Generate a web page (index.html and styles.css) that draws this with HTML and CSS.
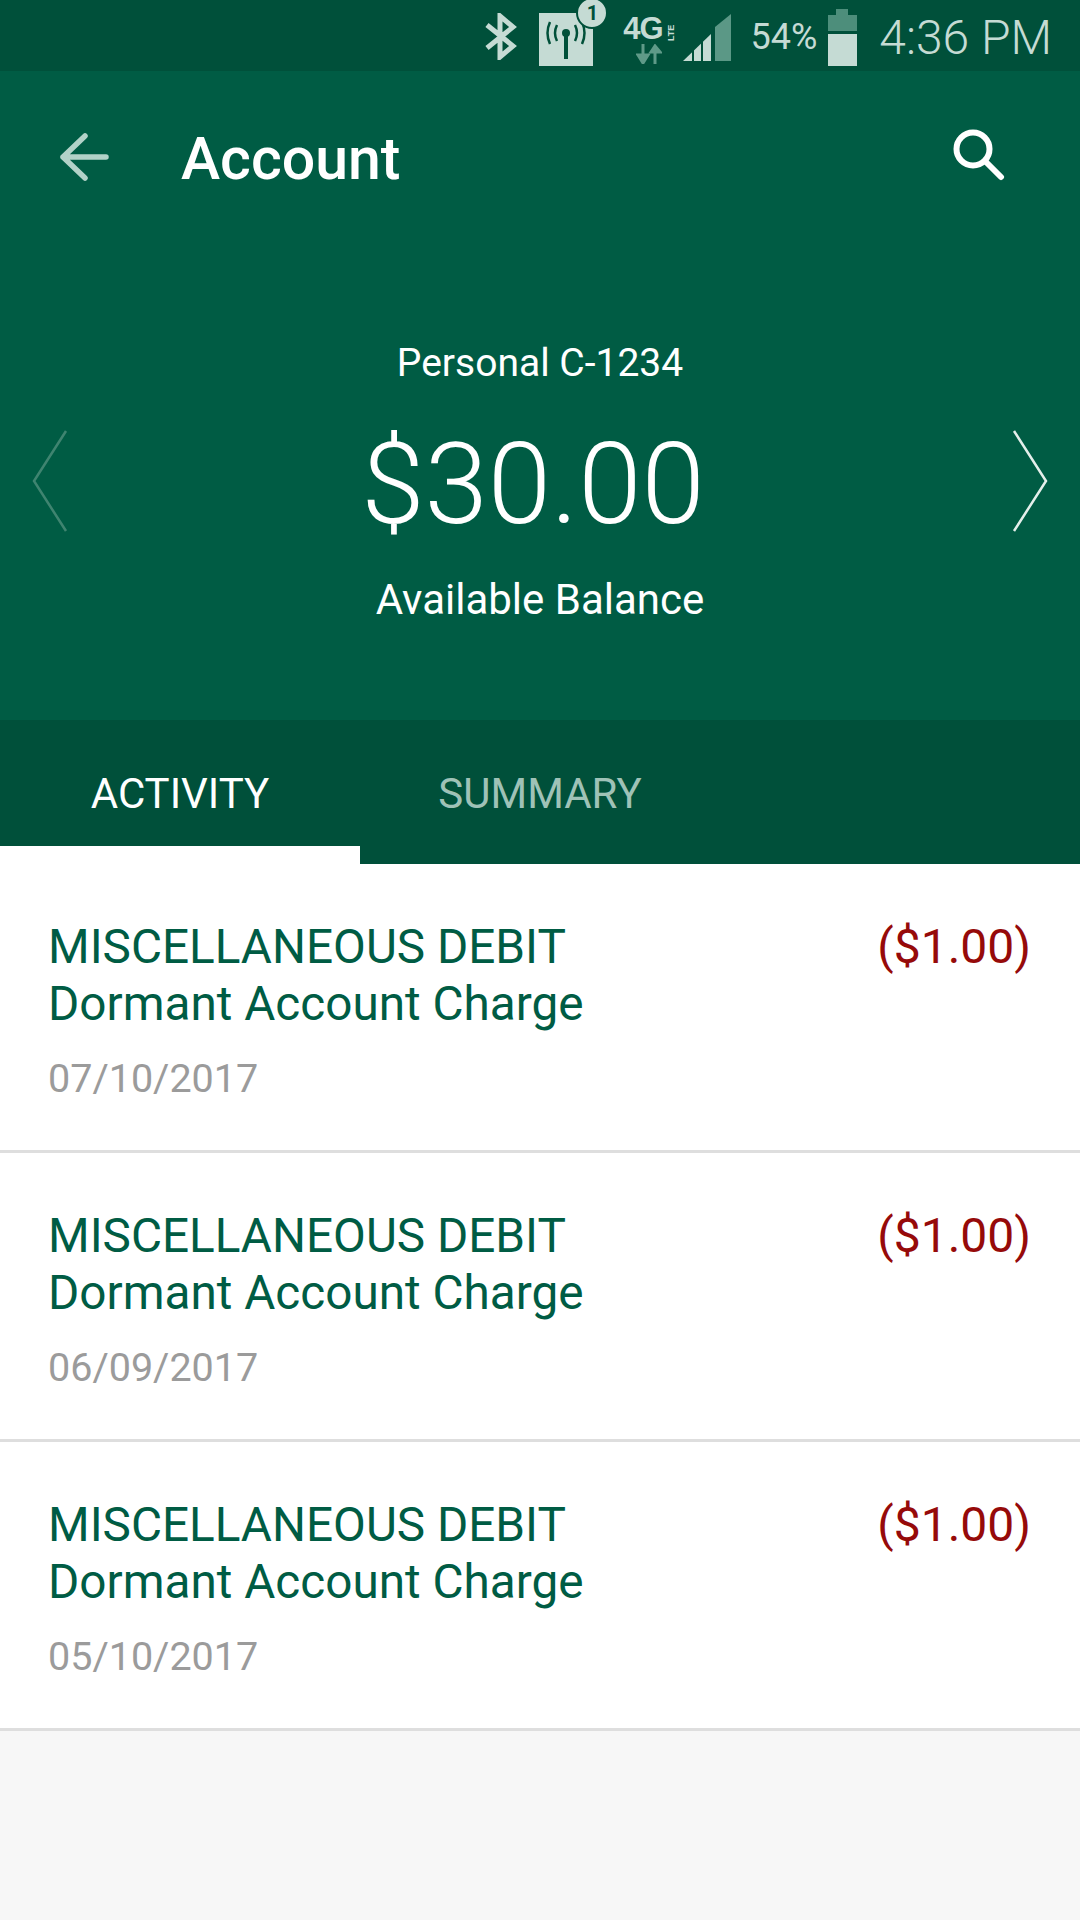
FILE: index.html
```html
<!DOCTYPE html>
<html lang="en">
<head>
  <meta charset="UTF-8">
  <title>Account</title>
  <link rel="stylesheet" href="styles.css">
</head>
<body>

  <div class="statusbar">
    <svg class="st-bt" width="33" height="47" viewBox="0 0 33 47">
      <path d="M3 12 L29 33 L16 44 V3 L29 14 L3 35" fill="none" stroke="#c5dbd4" stroke-width="5"/>
    </svg>
    <div class="st-cell">
      <svg width="54" height="53" viewBox="0 0 54 53">
        <rect width="54" height="53" fill="#c5dbd4"/>
        <circle cx="27" cy="20" r="4" fill="#005039"/>
        <path d="M27 20 V46" stroke="#005039" stroke-width="4"/>
        <path d="M18 12 Q14 20 18 28 M36 12 Q40 20 36 28 M11 9 Q6 20 11 31 M43 9 Q48 20 43 31" fill="none" stroke="#005039" stroke-width="2.5"/>
      </svg>
      <span class="st-badge">1</span>
    </div>
    <div class="st-net">
      <div class="st-4g"><span>4G</span><span class="st-lte">LTE</span></div>
      <svg width="26" height="20" viewBox="0 0 26 20">
        <path d="M7 0 V12 M2 11 L7 19 L12 11 Z" stroke="#5f9a88" stroke-width="3" fill="#5f9a88"/>
        <path d="M19 20 V8 M15 8 L19 2 L24 8 Z" stroke="#5f9a88" stroke-width="3" fill="#5f9a88"/>
      </svg>
    </div>
    <svg class="st-signal" width="48" height="48" viewBox="0 0 48 48">
      <path d="M32 48 H48 V1 L32 14 Z" fill="#5b9886"/>
      <path d="M0 48 L28 21 V48 Z" fill="#c5dbd4"/>
      <path d="M10 48 V36 M19 48 V28" stroke="#005039" stroke-width="2"/>
    </svg>
    <span class="st-pct">54%</span>
    <svg class="st-batt" width="29" height="57" viewBox="0 0 29 57">
      <path d="M8 0 H20 V6 H29 V22 H0 V6 H8 Z" fill="#4d8e7b"/>
      <rect y="25" width="29" height="32" fill="#c5dbd4"/>
    </svg>
    <span class="st-time">4:36 PM</span>
  </div>

  <header class="hero">
    <div class="appbar">
      <svg class="ic-back" width="50" height="48" viewBox="0 0 50 48">
        <path d="M47 24 H4 M26 3 L4 24 L26 45" fill="none" stroke="#b2d2c8" stroke-width="5.5" stroke-linecap="round" stroke-linejoin="round"/>
      </svg>
      <h1 class="title">Account</h1>
      <svg class="ic-search" width="52" height="52" viewBox="0 0 52 52">
        <circle cx="20" cy="20" r="16.5" fill="none" stroke="#fff" stroke-width="6"/>
        <path d="M32 32 L48 48" stroke="#fff" stroke-width="6" stroke-linecap="round"/>
      </svg>
    </div>
    <div class="acct-name">Personal C-1234</div>
    <div class="balance-row">
      <svg class="chev" width="36" height="104" viewBox="0 0 36 104">
        <path d="M34 2 L2 52 L34 102" fill="none" stroke="#3f8470" stroke-width="2.5"/>
      </svg>
      <div class="amount">$30.00</div>
      <svg class="chev" width="36" height="104" viewBox="0 0 36 104">
        <path d="M2 2 L34 52 L2 102" fill="none" stroke="#e4efeb" stroke-width="2.5"/>
      </svg>
    </div>
    <div class="avail">Available Balance</div>
  </header>

  <nav class="tabs">
    <div class="tab activo">ACTIVITY</div>
    <div class="tab">SUMMARY</div>
  </nav>

  <main class="lista">
    <div class="fila">
      <div class="info">
        <div class="tipo">MISCELLANEOUS DEBIT</div>
        <div class="tipo">Dormant Account Charge</div>
        <div class="fecha">07/10/2017</div>
      </div>
      <div class="monto">($1.00)</div>
    </div>
    <div class="fila">
      <div class="info">
        <div class="tipo">MISCELLANEOUS DEBIT</div>
        <div class="tipo">Dormant Account Charge</div>
        <div class="fecha">06/09/2017</div>
      </div>
      <div class="monto">($1.00)</div>
    </div>
    <div class="fila">
      <div class="info">
        <div class="tipo">MISCELLANEOUS DEBIT</div>
        <div class="tipo">Dormant Account Charge</div>
        <div class="fecha">05/10/2017</div>
      </div>
      <div class="monto">($1.00)</div>
    </div>
  </main>

</body>
</html>
```

FILE: styles.css
```css
* {
  box-sizing: border-box;
}

html, body {
  margin: 0;
  padding: 0;
}

body {
  width: 1080px;
  height: 1920px;
  overflow: hidden;
  background-color: #f7f7f7;
  font-family: Roboto, sans-serif;
  color: white;
}

.statusbar {
  height: 71px;
  background-color: #00503a;
  display: flex;
  align-items: center;
  justify-content: flex-end;
  padding-right: 28px;
  color: #c5dbd4;
}

.st-bt {
  margin-right: 22px;
  margin-top: 2px;
}

.st-cell {
  position: relative;
  width: 54px;
  height: 53px;
  margin-right: 25px;
  margin-top: 8px;
}

.st-cell svg {
  display: block;
}

.st-badge {
  position: absolute;
  top: -16px;
  right: -15px;
  width: 32px;
  height: 32px;
  border-radius: 50%;
  background-color: #c5dbd4;
  border: 2px solid #00503a;
  color: #00503a;
  font-size: 20px;
  font-weight: 700;
  line-height: 28px;
  text-align: center;
}

.st-net {
  width: 62px;
  margin-right: 3px;
  margin-top: 8px;
  display: flex;
  flex-direction: column;
  align-items: center;
}

.st-4g {
  display: flex;
  align-items: flex-start;
  height: 28px;
  font-family: "Liberation Sans", sans-serif;
  font-size: 31px;
  font-weight: 700;
  line-height: 26px;
  letter-spacing: -1px;
}

.st-lte {
  font-size: 9px;
  line-height: 10px;
  letter-spacing: 0;
  writing-mode: vertical-rl;
  transform: rotate(180deg);
  margin-left: 3px;
  margin-top: 3px;
  height: 22px;
}

.st-signal {
  margin-top: 2px;
}

.st-pct {
  font-size: 36px;
  margin-left: 19px;
  margin-right: 11px;
  padding-top: 3px;
}

.st-batt {
  margin-top: 3px;
}

.st-time {
  font-size: 48px;
  font-weight: 300;
  margin-left: 22px;
  padding-top: 3px;
}

.hero {
  height: 649px;
  background-color: #005c44;
}

.appbar {
  display: flex;
  align-items: center;
  height: 175px;
  padding: 0 75px 0 59px;
}

.ic-back {
  margin-top: -4px;
}

.ic-search {
  margin-top: -8px;
}

.title {
  flex: 1;
  margin: 0 0 0 72px;
  font-size: 59px;
  font-weight: 500;
}

.acct-name {
  margin-top: 94px;
  text-align: center;
  font-size: 39px;
  line-height: 46px;
}

.balance-row {
  display: flex;
  align-items: center;
  justify-content: space-between;
  padding: 0 32px;
  margin-top: 38px;
  height: 120px;
}

.chev {
  margin-bottom: 7px;
}

.amount {
  font-size: 114px;
  font-weight: 300;
  line-height: 120px;
  margin-right: 14px;
}

.avail {
  margin-top: 31px;
  text-align: center;
  font-size: 42px;
  line-height: 50px;
}

.tabs {
  height: 144px;
  background-color: #00503a;
  display: grid;
  grid-template-columns: 360px 360px;
}

.tab {
  height: 144px;
  font-size: 42px;
  text-align: center;
  line-height: 148px;
  color: #9fc2b7;
}

.tab.activo {
  color: white;
  border-bottom: 18px solid white;
}

.lista {
  background-color: white;
}

.fila {
  height: 289px;
  padding: 55px 49px 0 48px;
  display: flex;
  justify-content: space-between;
  border-bottom: 3px solid #dedede;
}

.tipo {
  color: #005c44;
  font-size: 47.7px;
  line-height: 57px;
}

.fecha {
  margin-top: 21px;
  color: #9b9b9b;
  font-size: 39.5px;
  line-height: 50px;
}

.monto {
  color: #960a0a;
  font-size: 48px;
  line-height: 55px;
}
```
